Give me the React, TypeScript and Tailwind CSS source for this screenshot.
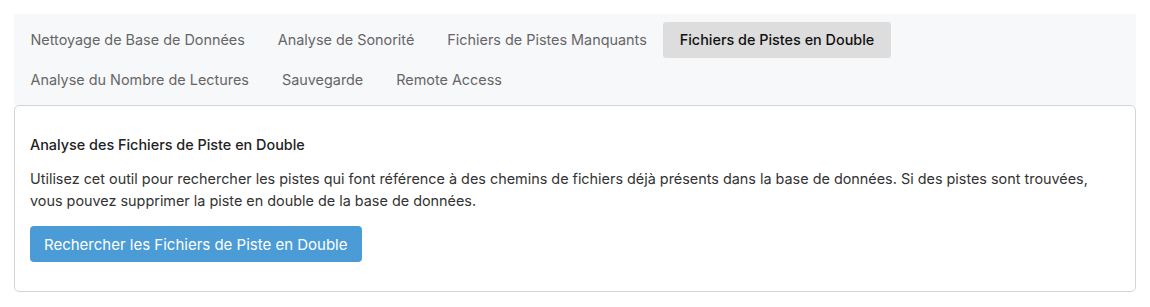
import { useState } from 'react'

const TABS = [
  'Nettoyage de Base de Données',
  'Analyse de Sonorité',
  'Fichiers de Pistes Manquants',
  'Fichiers de Pistes en Double',
  'Analyse du Nombre de Lectures',
  'Sauvegarde',
  'Remote Access',
]

export default function App() {
  const [active, setActive] = useState(3)

  return (
    <div className="p-[14px] bg-white text-[14.4px]" style={{ fontFamily: 'Inter, "Noto Sans", sans-serif' }}>
      {/* Tabs */}
      <div className="bg-[#f7f8fa] flex flex-wrap gap-y-1 pt-2 pb-[7px]">
        {TABS.map((t, i) => (
          <button
            key={t}
            onClick={() => setActive(i)}
            className={`h-9 px-[16.5px] rounded-[3px] leading-none ${
              i === active ? 'bg-[#dddddd] text-[#111] font-medium' : 'text-[#666]'
            }`}
          >
            {t}
          </button>
        ))}
      </div>

      {/* Panel */}
      <div className="border border-[#d4d4d4] rounded-[5px] px-[15px] pt-[29px] pb-[29px]">
        <h3 className="font-medium text-[#222] leading-5">Analyse des Fichiers de Piste en Double</h3>
        <p className="mt-[13px] text-[#333] leading-[22px]">
          Utilisez cet outil pour rechercher les pistes qui font référence à des chemins de fichiers déjà présents dans la base de données. Si des pistes sont trouvées, vous pouvez supprimer la piste en double de la base de données.
        </p>
        <button className="mt-[14px] h-9 px-[14px] rounded-[4px] bg-[#4a9bd6] text-white text-[15px] leading-none">
          Rechercher les Fichiers de Piste en Double
        </button>
      </div>
    </div>
  )
}
